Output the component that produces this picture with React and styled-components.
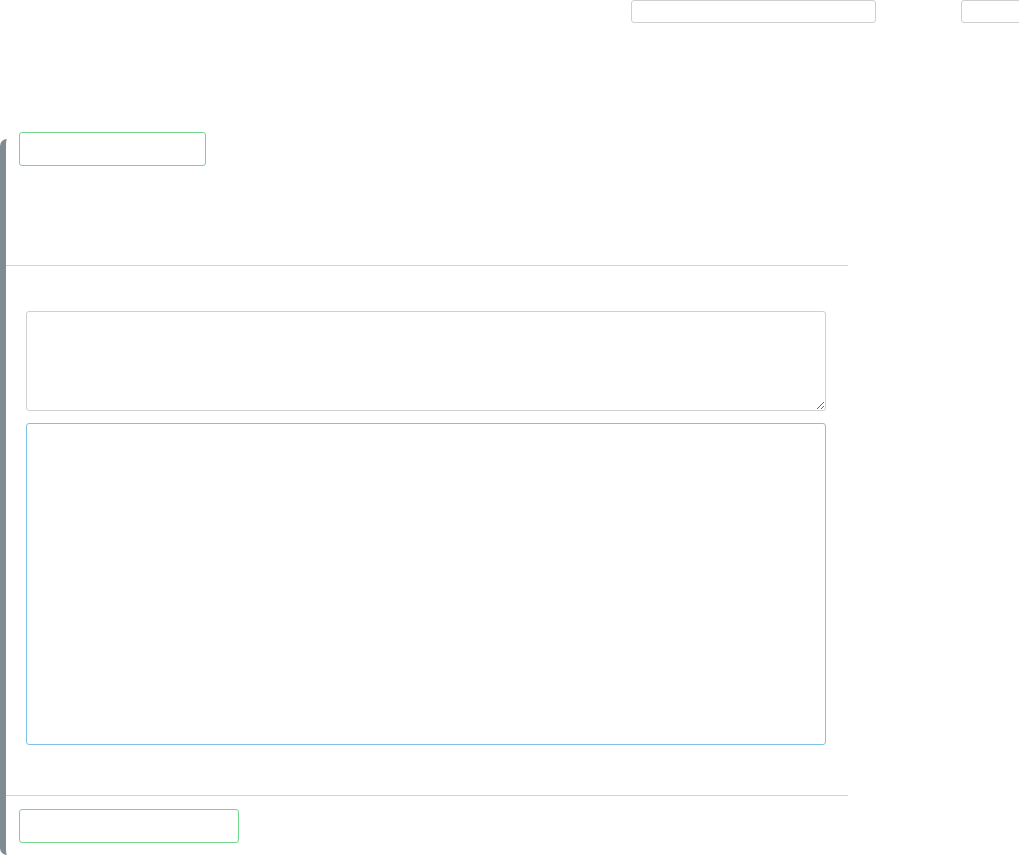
import React from "react";
import styled, { createGlobalStyle } from "styled-components";

const GlobalStyle = createGlobalStyle`
  body {
    margin: 0;
    background: #fff;
    font-family: "Liberation Sans", Arial, sans-serif;
    overflow-x: hidden;
  }
`;

const Page = styled.div`
  width: 1019px;
  height: 856px;
  overflow: hidden;
`;

const Header = styled.div`
  display: flex;
  align-items: flex-start;
  gap: 85px;
  height: 139px;
  padding-left: 631px;
  box-sizing: border-box;
`;

const SearchInput = styled.input`
  flex: none;
  width: ${(props) => props.w}px;
  height: 23px;
  box-sizing: border-box;
  border: 1px solid #cfcfcf;
  border-radius: 3px;
  background: #fff;
  outline: none;
`;

const Panel = styled.section`
  display: flow-root;
  width: 848px;
  box-sizing: border-box;
  border-left: 6px solid #808b92;
  border-radius: 7px 0 0 7px;
`;

const Toolbar = styled.div`
  margin-top: -7px;
  height: 133px;
  padding: 0 13px;
  box-sizing: border-box;
`;

const GreenButton = styled.button`
  display: block;
  width: ${(props) => props.w}px;
  height: 34px;
  border: 1px solid #74d88c;
  border-radius: 3px;
  background: #fff;
  padding: 0;
`;

const Divider = styled.hr`
  margin: 0;
  border: none;
  border-top: 1px solid #d3d3d3;
`;

const Body = styled.div`
  display: flex;
  flex-direction: column;
  gap: 12px;
  padding: 45px 20px 50px;
`;

const Notes = styled.textarea`
  display: block;
  width: 800px;
  height: 100px;
  box-sizing: border-box;
  border: 1px solid #d0d0d0;
  border-radius: 3px;
  margin: 0;
  outline: none;
`;

const Editor = styled.div`
  width: 800px;
  height: 322px;
  box-sizing: border-box;
  border: 1px solid #7cc2ea;
  border-radius: 3px;
`;

const Footer = styled.div`
  padding: 13px 13px 12px;
`;

export default function App() {
  return (
    <Page>
      <GlobalStyle />
      <Header>
        <SearchInput w={245} />
        <SearchInput w={80} />
      </Header>
      <Panel>
        <Toolbar>
          <GreenButton w={187} />
        </Toolbar>
        <Divider />
        <Body>
          <Notes />
          <Editor />
        </Body>
        <Divider />
        <Footer>
          <GreenButton w={220} />
        </Footer>
      </Panel>
    </Page>
  );
}
